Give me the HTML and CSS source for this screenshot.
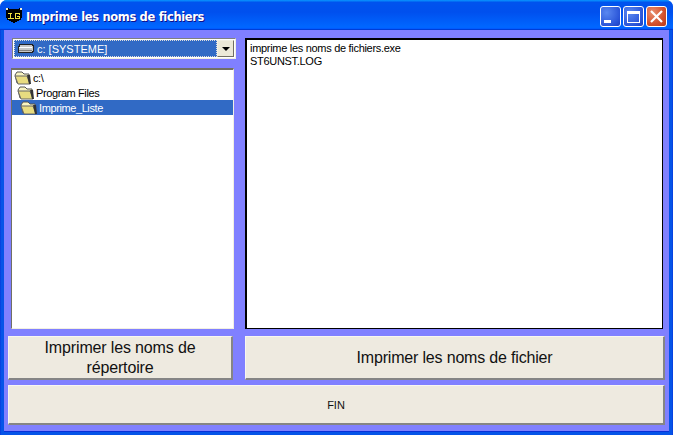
FILE: index.html
```html
<!DOCTYPE html>
<html lang="fr">
<head>
<meta charset="utf-8">
<title>Imprime les noms de fichiers</title>
<link rel="stylesheet" href="styles.css">
</head>
<body>
<div class="window">
  <div class="titlebar">
    <svg class="appicon" width="16" height="16" viewBox="0 0 16 16" shape-rendering="crispEdges"><path d="M0 0h3v1h10V0h3v10h-1v2h-2v1h-2v1h-2v1H7v-1H5v-1H3v-1H1v-2H0z" fill="#000"/><path d="M0 0h2v2H0zM14 0h2v2h-2z" fill="#f0f0d0"/><path d="M2 5h4v1H5v4h3v1H2v-1h2V6H2zM9 5h5v2h-1V6h-3v4h3V9h-2V8h3v3H9z" fill="#f0e040"/></svg>
    <span class="title">Imprime les noms de fichiers</span>
    <div class="controls">
      <div class="ctl"><span class="min-glyph"></span></div>
      <div class="ctl"><span class="max-glyph"></span></div>
      <div class="ctl close">
        <svg width="15" height="15" viewBox="0 0 15 15"><path d="M2 2l11 11M13 2L2 13" stroke="#fff" stroke-width="2.2"/></svg>
      </div>
    </div>
  </div>
  <div class="client">
    <div class="panes">
      <div class="left">
        <div class="combo">
          <div class="combo-value">
            <svg width="17" height="11" viewBox="0 0 17 11" shape-rendering="crispEdges"><path d="M2 1h13v1h1v6h-1v1H1V3h1z" fill="#c8c8c8" stroke="#222" stroke-width="1"/><path d="M2 4h13" stroke="#fff"/><path d="M2 7h13" stroke="#808080"/></svg>
            <span>c: [SYSTEME]</span>
          </div>
          <div class="combo-btn"><span class="arrow"></span></div>
        </div>
        <div class="tree">
          <div class="node n0">
            <svg class="folder" viewBox="0 0 18 14"><use href="#folder"/></svg><span>c:\</span>
          </div>
          <div class="node n1">
            <svg class="folder" viewBox="0 0 18 14"><use href="#folder"/></svg><span>Program Files</span>
          </div>
          <div class="node n2 selected">
            <svg class="folder" viewBox="0 0 18 14"><use href="#folder"/></svg><span>Imprime_Liste</span>
          </div>
        </div>
      </div>
      <div class="files">
        <div>imprime les noms de fichiers.exe</div>
        <div>ST6UNST.LOG</div>
      </div>
    </div>
    <div class="row">
      <button class="btn btn-left">Imprimer les noms de répertoire</button>
      <button class="btn btn-right">Imprimer les noms de fichier</button>
    </div>
    <button class="btn btn-fin">FIN</button>
  </div>
</div>
<svg class="defs" width="0" height="0">
  <symbol id="folder" viewBox="0 0 18 14">
    <path d="M1 4l2-3h5l2 2h5v9H3z" fill="#f8f4c0" stroke="#555" stroke-width="1"/>
    <path d="M1 5h12l3 8H4z" fill="#e8dc80" stroke="#666" stroke-width="1"/>
    <path d="M13 4h3l1 9h-2z" fill="#333"/>
  </symbol>
</svg>
</body>
</html>
```
FILE: styles.css
```css
html, body { margin: 0; padding: 0; height: 100%; overflow: hidden; background: #fff; }
.window { width: 673px; height: 435px; display: flex; flex-direction: column; box-sizing: border-box; font-family: "Liberation Sans", Arial, sans-serif; color: #000; border-radius: 7px 7px 0 0; background: linear-gradient(90deg, #0831d9 0, #0554e8 1px, #0554e8 672px, #0831d9 673px); overflow: hidden; }
.titlebar { height: 30px; flex: none; display: flex; align-items: center; padding: 3px 6px 0 6px; box-sizing: border-box; background: linear-gradient(180deg, #0997ff 0, #0053ee 8%, #0050ee 40%, #0066ff 88%, #0066ff 93%, #005bff 95%, #003dd7 96%, #003dd7 100%); }
.appicon { flex: none; margin: 0 4px 1px 0; }
.title { color: #fff; font: bold 11.5px "DejaVu Sans", sans-serif; letter-spacing: -0.34px; text-shadow: 1px 1px #0f1089; flex: 1; }
.controls { display: flex; gap: 2px; }
.ctl { width: 21px; height: 21px; box-sizing: border-box; border: 1px solid #fff; border-radius: 3px; background: radial-gradient(circle at 30% 30%, #5a88f0, #2a55d8 70%, #1c3fc0); display: flex; align-items: center; justify-content: center; }
.close { background: radial-gradient(circle at 30% 30%, #e89070, #d4502c 60%, #b83a18); }
.min-glyph { width: 7px; height: 3px; background: #fff; align-self: flex-end; margin: 0 6px 3px 0; }
.max-glyph { width: 13px; height: 12px; box-sizing: border-box; border: 1px solid #fff; border-top-width: 3px; }
.client { flex: 1; margin: 0 4px 4px; background: #8080ff; padding: 8px 4px 6px 4px; display: flex; flex-direction: column; box-shadow: 0 1px 0 #0831d9; min-height: 0; }
.panes { display: flex; height: 291px; flex: none; padding: 0 2px 0 3px; gap: 10px; }
.left { width: 224px; flex: none; display: flex; flex-direction: column; gap: 9px; }
.combo { height: 21px; margin: 0 -1px 0 1px; box-sizing: border-box; background: #fff; border: 1px solid; border-color: #808080 #f1efe2 #f1efe2 #808080; display: flex; padding: 1px; flex: none; }
.combo-value { flex: 1; background: #316ac5; color: #fff; font-size: 11px; display: flex; align-items: center; gap: 3px; padding-left: 3px; outline: 1px dotted #ddd; outline-offset: -1px; }
.combo-btn { width: 17px; background: #ece9d8; border: 1px solid; border-color: #f1efe2 #716f64 #716f64 #f1efe2; box-sizing: border-box; display: flex; align-items: center; justify-content: center; }
.arrow { width: 0; height: 0; border-left: 4px solid transparent; border-right: 4px solid transparent; border-top: 4px solid #000; }
.tree { flex: 1; background: #fff; border: 1px solid; border-color: #716f64 #f1efe2 #f1efe2 #716f64; border-top-width: 2px; font-size: 11px; letter-spacing: -0.4px; margin-right: 1px; }
.node { height: 15px; display: flex; align-items: center; white-space: nowrap; }
.folder { width: 18px; height: 14px; flex: none; margin-right: 1px; }
.n0 { padding-left: 2px; }
.n1 { padding-left: 5px; }
.n2 { padding-left: 8px; }
.selected { background: #316ac5; color: #fff; }
.files { flex: 1; background: #fff; border: 1px solid #000; border-top-width: 2px; border-left-width: 2px; padding: 2px 3px; font-size: 11px; letter-spacing: -0.3px; line-height: 13px; }
.row { display: flex; gap: 12px; margin-top: 7px; height: 44px; flex: none; }
.btn { background: #eeeae0; border: 1px solid; border-color: #f8f6f0 #858585 #858585 #f8f6f0; border-width: 1px 2px 2px 1px; box-sizing: border-box; font-family: "Liberation Sans", Arial, sans-serif; padding: 0; color: #111; }
.btn-left { width: 225px; font-size: 16px; letter-spacing: -0.15px; line-height: 20px; padding: 0 30px; }
.btn-right { flex: 1; font-size: 16px; letter-spacing: -0.18px; }
.btn-fin { margin-top: 5px; height: 40px; flex: none; font-size: 11px; }
.defs { position: absolute; }
```
